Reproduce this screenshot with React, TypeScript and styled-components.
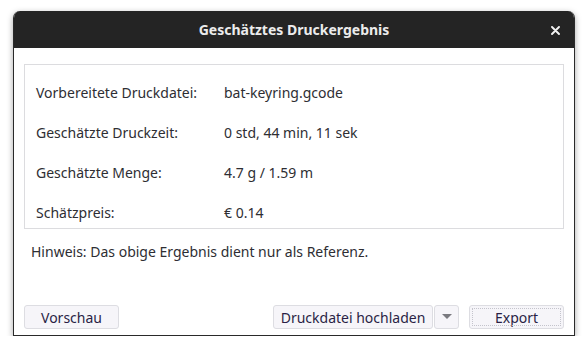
import { Fragment } from 'react'
import styled, { createGlobalStyle } from 'styled-components'

const GlobalStyle = createGlobalStyle`
  html, body {
    margin: 0;
    background: #ffffff;
  }
  body {
    font-family: 'Noto Sans', 'Open Sans', sans-serif;
    font-size: 14px;
    color: #2e2e33;
  }
`

const Stage = styled.div`
  padding: 11px 13px 0 13px;
  width: 562px;
`

const Dialog = styled.section`
  display: flex;
  flex-direction: column;
  width: 562px;
  height: 325px;
  box-sizing: border-box;
  border: 1px solid #2a2a2a;
  border-top: none;
  border-radius: 7px 7px 0 0;
  background: #ffffff;
  box-shadow: 0 2px 6px rgba(0, 0, 0, 0.35);
  overflow: hidden;
`

const TitleBar = styled.header`
  position: relative;
  display: flex;
  align-items: center;
  justify-content: center;
  height: 37px;
  flex-shrink: 0;
  background: #242424;
  color: #ececec;
  font-weight: 700;
  font-size: 14px;
`

const CloseButton = styled.button`
  position: absolute;
  right: 14px;
  top: 15px;
  display: flex;
  padding: 0;
  border: none;
  background: none;
`

const Body = styled.div`
  display: flex;
  flex: 1;
  flex-direction: column;
  padding: 16px 10px 6px 10px;
`

const InfoBox = styled.div`
  display: grid;
  grid-template-columns: 188px 1fr;
  row-gap: 20px;
  border: 1px solid #dcdcdf;
  padding: 18px 11px 5px 11px;
  line-height: 20px;
`

const Label = styled.span``

const Value = styled.span``

const Note = styled.p`
  margin: 13px 0 0 7px;
  line-height: 20px;
`

const ButtonRow = styled.div`
  display: flex;
  align-items: center;
  margin-top: auto;
`

const Button = styled.button<{ $width: number; $focused?: boolean }>`
  display: flex;
  align-items: center;
  justify-content: center;
  box-sizing: border-box;
  width: ${(p) => p.$width}px;
  height: 24px;
  padding: 0;
  border: 1px solid #dddde2;
  border-radius: 3px;
  background: #f6f5f9;
  color: #2a1f45;
  font-family: inherit;
  font-size: 14px;
  outline: ${(p) => (p.$focused ? '1px dotted #c4c4cc' : 'none')};
  outline-offset: -4px;
`

const Spacer = styled.div`
  flex: 1;
`

const SplitGroup = styled.div`
  display: flex;
  gap: 1px;
  margin-right: 10px;
`

const rows = [
  ['Vorbereitete Druckdatei:', 'bat-keyring.gcode'],
  ['Geschätzte Druckzeit:', '0 std, 44 min, 11 sek'],
  ['Geschätzte Menge:', '4.7 g / 1.59 m'],
  ['Schätzpreis:', '€ 0.14'],
]

export default function App() {
  return (
    <>
      <GlobalStyle />
      <Stage>
        <Dialog>
          <TitleBar>
            Geschätztes Druckergebnis
            <CloseButton aria-label="Schließen">
              <svg width="9" height="9" viewBox="0 0 9 9">
                <path
                  d="M1 1 L8 8 M8 1 L1 8"
                  stroke="#f2f2f2"
                  strokeWidth="1.9"
                  strokeLinecap="round"
                />
              </svg>
            </CloseButton>
          </TitleBar>
          <Body>
            <InfoBox>
              {rows.map(([label, value]) => (
                <Fragment key={label}>
                  <Label>{label}</Label>
                  <Value>{value}</Value>
                </Fragment>
              ))}
            </InfoBox>
            <Note>Hinweis: Das obige Ergebnis dient nur als Referenz.</Note>
            <ButtonRow>
              <Button $width={95}>Vorschau</Button>
              <Spacer />
              <SplitGroup>
                <Button $width={160}>Druckdatei hochladen</Button>
                <Button $width={25} aria-label="Mehr">
                  <svg width="10" height="6" viewBox="0 0 10 6">
                    <path d="M0 0 H10 L5 5 Z" fill="#7a7a80" />
                  </svg>
                </Button>
              </SplitGroup>
              <Button $width={95} $focused>
                Export
              </Button>
            </ButtonRow>
          </Body>
        </Dialog>
      </Stage>
    </>
  )
}
